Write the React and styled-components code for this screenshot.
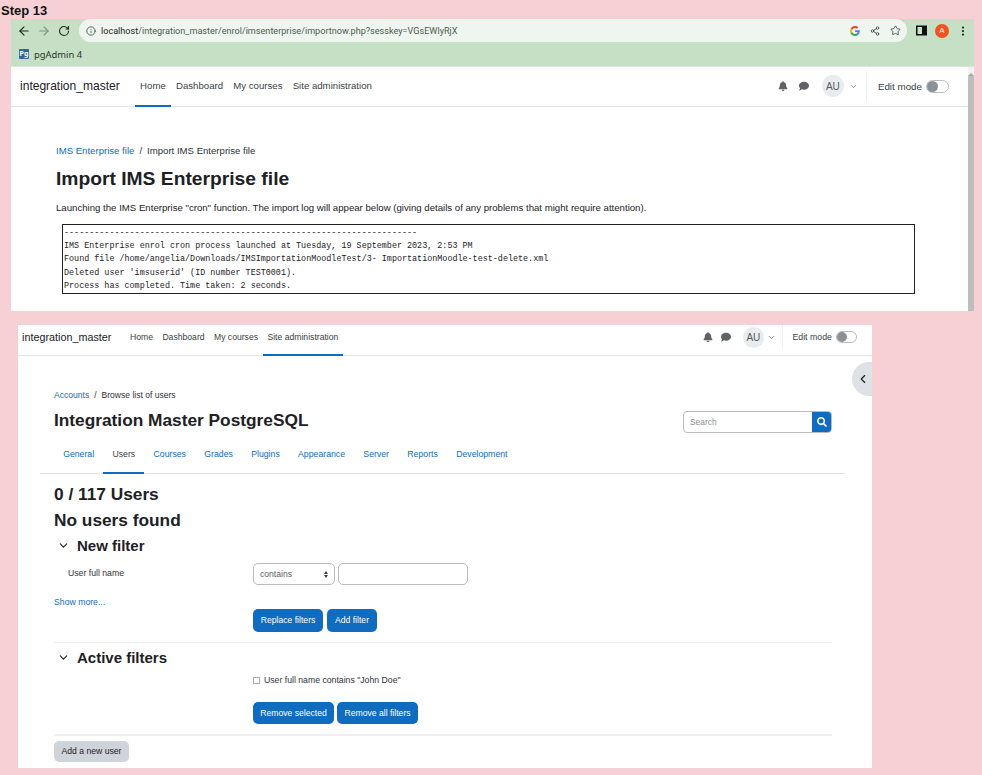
import React from 'react';
import styled, { createGlobalStyle } from 'styled-components';
import { FaBell, FaComment, FaSearch } from 'react-icons/fa';
import { ArrowLeft, ArrowRight, RotateCw, Info, ChevronDown, ChevronLeft, EllipsisVertical, Share2, Star } from 'lucide-react';

const GlobalStyle = createGlobalStyle`
  html, body {
    margin: 0;
    padding: 0;
    background: #f7d0d5;
    font-family: "Liberation Sans", Arial, sans-serif;
    color: #1d2125;
  }
  * { box-sizing: border-box; }
`;

const Page = styled.div`
  width: 982px;
  height: 775px;
  overflow: hidden;
`;

const StepTitle = styled.div`
  height: 19px;
  padding: 3px 0 0 1px;
  font-size: 13px;
  font-weight: 700;
  line-height: 15px;
  color: #111;
`;

const BrowserShot = styled.div`
  margin-left: 11px;
  width: 963px;
  height: 292px;
  background: #fff;
  display: flex;
  flex-direction: column;
`;

const Toolbar = styled.div`
  height: 23px;
  background: #c5e0c5;
  display: flex;
  align-items: center;
`;

const NavIcons = styled.div`
  width: 68px;
  padding-left: 6px;
  display: flex;
  gap: 6px;
  color: #3a4a3c;
  flex: none;
`;

const Omnibox = styled.div`
  width: 828px;
  height: 23px;
  background: #eff6ef;
  border-radius: 12px;
  display: flex;
  align-items: center;
  padding: 0 6px 0 7px;
  flex: none;
`;

const Url = styled.span`
  margin-left: 5px;
  font-family: Roboto, sans-serif;
  font-size: 9.1px;
  color: #4d5c50;
  flex: 1;
  white-space: nowrap;
  b { font-weight: 400; color: #1f2a22; }
`;

const OmniIcons = styled.div`
  display: flex;
  align-items: center;
  gap: 10px;
  color: #3c4a3e;
`;

const ChromeEnd = styled.div`
  flex: 1;
  display: flex;
  align-items: center;
  justify-content: space-between;
  padding: 0 5px 0 9px;
  color: #1f2a22;
`;

const ProfileDot = styled.div`
  width: 14px;
  height: 14px;
  border-radius: 50%;
  background: #f4511e;
  color: #fff;
  font-size: 8px;
  line-height: 14px;
  text-align: center;
`;

const BookmarkBar = styled.div`
  height: 25px;
  background: #c5e0c5;
  border-bottom: 1px solid #dde3dd;
  display: flex;
  align-items: center;
  padding-left: 8px;
  gap: 5px;
  font-family: "Noto Sans", sans-serif;
  font-size: 9.4px;
  color: #2b352d;
`;

const PgIcon = styled.span`
  width: 10px;
  height: 10px;
  background: #336791;
  border-radius: 1px;
  color: #fff;
  font-size: 7px;
  font-weight: 700;
  line-height: 10px;
  text-align: center;
`;

const BrowserBody = styled.div`
  flex: 1;
  display: flex;
  min-height: 0;
`;

const BrowserMain = styled.div`
  flex: 1;
  min-width: 0;
`;

const ScrollTrack = styled.div`
  width: 6px;
  background: #f1f1f1;
  display: flex;
  flex-direction: column;
`;

const ScrollArrow = styled.div`
  height: 9px;
  flex: none;
  display: flex;
  justify-content: center;
  padding-top: 3px;
  &::before {
    content: '';
    border-left: 3px solid transparent;
    border-right: 3px solid transparent;
    border-bottom: 3px solid #a3a3a3;
  }
`;

const ScrollThumb = styled.div`
  flex: 1;
  background: #bdbdbd;
`;

const Navbar = styled.div`
  height: ${(p) => p.$height}px;
  background: #fff;
  border-bottom: 1px solid #e3e4e5;
  display: flex;
  align-items: stretch;
  padding-left: ${(p) => p.$left}px;
`;

const Brand = styled.div`
  font-size: ${(p) => p.$size}px;
  color: #1d2125;
  align-self: center;
  margin-bottom: ${(p) => p.$lift}px;
  width: ${(p) => p.$width}px;
  flex: none;
  white-space: nowrap;
`;

const NavLinks = styled.nav`
  display: flex;
  flex: 1;
`;

const NavLink = styled.a`
  font-size: ${(p) => p.$size}px;
  color: #3a3f44;
  padding: 0 ${(p) => p.$pad}px ${(p) => p.$lift}px;
  display: flex;
  align-items: center;
  border-bottom: 2px solid ${(p) => (p.$active ? '#0f6cbf' : 'transparent')};
  margin-bottom: -1px;
  white-space: nowrap;
`;

const UserArea = styled.div`
  display: flex;
  align-items: center;
  color: #5e6469;
  padding-right: ${(p) => p.$right}px;
  padding-bottom: ${(p) => p.$lift}px;
`;

const IconGap = styled.span`
  display: flex;
  align-items: center;
  margin-left: ${(p) => p.$before || 0}px;
  margin-right: ${(p) => p.$gap}px;
  color: #5f6368;
`;

const Avatar = styled.div`
  width: ${(p) => p.$size}px;
  height: ${(p) => p.$size}px;
  border-radius: 50%;
  background: #e9ecef;
  color: #555b60;
  font-size: 10px;
  display: flex;
  align-items: center;
  justify-content: center;
`;

const EditMode = styled.div`
  display: flex;
  align-items: center;
  align-self: stretch;
  border-left: 1px solid #eff0f1;
  margin: ${(p) => p.$inset}px 0 ${(p) => p.$inset}px ${(p) => p.$gap}px;
  padding-left: ${(p) => p.$pad}px;
  gap: 4px;
  font-size: ${(p) => p.$size}px;
  color: #3a3f44;
`;

const Toggle = styled.span`
  width: ${(p) => p.$width}px;
  height: ${(p) => p.$height}px;
  border: 1px solid #b8bcc0;
  border-radius: 7px;
  display: flex;
  align-items: center;
  &::before {
    content: '';
    width: ${(p) => p.$height - 2}px;
    height: ${(p) => p.$height - 2}px;
    border-radius: 50%;
    background: #8b9199;
  }
`;

const ImportContent = styled.div`
  padding: 38px 0 0 45px;
`;

const Crumbs = styled.div`
  display: flex;
  gap: ${(p) => p.$gap}px;
  font-size: ${(p) => p.$size}px;
  line-height: 12px;
  color: #2e3338;
  a { color: #0f6cbf; }
`;

const Heading = styled.h1`
  margin: ${(p) => p.$top || 0}px 0 0;
  font-size: ${(p) => p.$size}px;
  line-height: ${(p) => p.$line}px;
  font-weight: 700;
  color: #1d2125;
`;

const Lead = styled.p`
  margin: 8px 0 0;
  font-size: 9.65px;
  line-height: 14px;
  color: #1d2125;
`;

const LogBox = styled.pre`
  margin: 9px 0 0 6px;
  width: 853px;
  height: 70px;
  border: 1px solid #222;
  padding: 2px 1px;
  font-family: "Liberation Mono", monospace;
  font-size: 8.42px;
  line-height: 13.2px;
  color: #1d2125;
`;

const AdminShot = styled.div`
  position: relative;
  margin: 14px 0 0 18px;
  width: 854px;
  height: 443px;
  background: #fff;
`;

const DrawerToggle = styled.div`
  position: absolute;
  right: 0;
  top: 37px;
  width: 20px;
  height: 34px;
  background: #dee2e6;
  border-radius: 17px 0 0 17px;
  display: flex;
  align-items: center;
  padding-left: 4px;
  color: #1d2125;
`;

const AdminContent = styled.div`
  padding: 33px 40px 0 36px;
`;

const HeadRow = styled.div`
  display: flex;
  justify-content: space-between;
  align-items: flex-start;
  margin-top: 10px;
  height: 22px;
`;

const SearchBox = styled.div`
  width: 149px;
  height: 22px;
  display: flex;
  border: 1px solid #b8bcc0;
  border-radius: 4px;
  overflow: hidden;
`;

const SearchText = styled.div`
  flex: 1;
  padding-left: 6px;
  font-size: 8.4px;
  line-height: 20px;
  color: #8a9096;
`;

const SearchButton = styled.div`
  width: 20px;
  margin: -1px;
  background: #0f6cbf;
  color: #fff;
  display: flex;
  align-items: center;
  justify-content: center;
`;

const Tabs = styled.div`
  display: flex;
  margin: 3px -13px 0 -14px;
  padding-left: 14px;
  height: 38px;
  border-bottom: 1px solid #e3e4e5;
`;

const Tab = styled.a`
  padding: 0 9.15px;
  display: flex;
  align-items: center;
  font-size: 8.72px;
  color: ${(p) => (p.$active ? '#3a3f44' : '#0f6cbf')};
  border-bottom: 2px solid ${(p) => (p.$active ? '#0f6cbf' : 'transparent')};
  margin-bottom: -1px;
`;

const CountHeading = styled.h2`
  margin: ${(p) => p.$top}px 0 0;
  font-size: 17.3px;
  line-height: 26px;
  font-weight: 700;
`;

const SectionHead = styled.div`
  display: flex;
  align-items: center;
  margin-top: ${(p) => p.$top}px;
  height: 26px;
  padding: 0 0 2px 3px;
  gap: 7px;
  font-size: 15px;
  font-weight: 700;
  color: #1d2125;
`;

const FormRow = styled.div`
  display: grid;
  grid-template-columns: 199px 1fr;
  margin-top: ${(p) => p.$top}px;
`;

const FieldLabel = styled.div`
  padding-left: 14px;
  font-size: 8.7px;
  line-height: 20px;
  color: #2e3338;
`;

const Fields = styled.div`
  display: flex;
  gap: ${(p) => p.$gap}px;
  align-items: center;
`;

const SelectBox = styled.div`
  width: 82px;
  height: 22px;
  border: 1px solid #b8bcc0;
  border-radius: 5px;
  padding: 0 6px;
  display: flex;
  align-items: center;
  justify-content: space-between;
  font-size: 8.6px;
  color: #5a6066;
`;

const Updown = styled.span`
  display: flex;
  flex-direction: column;
  gap: 1px;
  &::before, &::after {
    content: '';
    border-left: 2px solid transparent;
    border-right: 2px solid transparent;
  }
  &::before { border-bottom: 3px solid #3a3f44; }
  &::after { border-top: 3px solid #3a3f44; }
`;

const TextBox = styled.div`
  width: 130px;
  height: 22px;
  border: 1px solid #b8bcc0;
  border-radius: 5px;
`;

const ShowMore = styled.a`
  display: block;
  margin-top: 11px;
  font-size: 8.7px;
  line-height: 12px;
  height: 10px;
  color: #0f6cbf;
`;

const Button = styled.button`
  height: ${(p) => p.$height}px;
  width: ${(p) => p.$width}px;
  padding: 0 0 ${(p) => (p.$height > 22 ? 1 : 0)}px;
  border: 0;
  border-radius: 5px;
  background: ${(p) => (p.$secondary ? '#ced4da' : '#0f6cbf')};
  color: ${(p) => (p.$secondary ? '#1d2125' : '#fff')};
  font-family: inherit;
  font-size: 8.65px;
`;

const Divider = styled.div`
  margin-top: ${(p) => p.$top}px;
  height: ${(p) => p.$thick}px;
  background: #eff0f1;
`;

const CheckLine = styled.label`
  display: flex;
  align-items: center;
  gap: 4px;
  font-size: 8.7px;
  line-height: 12px;
  color: #2e3338;
`;

const CheckSquare = styled.span`
  width: 7px;
  height: 7px;
  border: 1px solid #a9adb1;
`;

const FooterRow = styled.div`
  margin-top: 4px;
`;

const GoogleG = () => (
  <svg width="10" height="10" viewBox="0 0 48 48">
    <path fill="#EA4335" d="M24 9.500c3.500 0 6.700 1.200 9.200 3.600l6.900-6.900C35.900 2.400 30.500 0 24 0 14.600 0 6.500 5.400 2.600 13.200l8 6.200C12.400 13.700 17.700 9.500 24 9.500z" />
    <path fill="#4285F4" d="M46.900 24.500c0-1.600-.1-3.100-.4-4.500H24v9h12.900c-.6 3-2.200 5.500-4.800 7.200l7.700 6c4.500-4.200 7.100-10.300 7.100-17.700z" />
    <path fill="#FBBC05" d="M10.600 28.600c-.5-1.400-.8-3-.8-4.600s.3-3.200.8-4.600l-8-6.200C.9 16.500 0 20.100 0 24s.9 7.500 2.600 10.800l8-6.200z" />
    <path fill="#34A853" d="M24 48c6.500 0 11.900-2.100 15.900-5.800l-7.700-6c-2.200 1.400-4.900 2.300-8.200 2.300-6.300 0-11.600-4.200-13.400-10l-8 6.200C6.500 42.600 14.600 48 24 48z" />
  </svg>
);

const SidePanelIcon = () => (
  <svg width="11" height="11" viewBox="0 0 11 11">
    <rect x="0.750" y="1.250" width="9.500" height="8.500" fill="none" stroke="#111" strokeWidth="1.500" />
    <rect x="6" y="1.250" width="4" height="8.500" fill="#111" />
  </svg>
);

const MoodleHeader = ({ height, left, lift, brandSize, brandWidth, linkSize, linkPad, active, avatarSize, right, inset, bellGap, commentGap, caretGap, caretAfter, editSize, editPad, toggleWidth, toggleHeight }) => (
  <Navbar $height={height} $left={left}>
    <Brand $size={brandSize} $width={brandWidth} $lift={lift}>integration_master</Brand>
    <NavLinks>
      {['Home', 'Dashboard', 'My courses', 'Site administration'].map((label) => (
        <NavLink key={label} $size={linkSize} $pad={linkPad} $lift={lift} $active={label === active}>
          {label}
        </NavLink>
      ))}
    </NavLinks>
    <UserArea $right={right} $lift={lift}>
      <IconGap $gap={bellGap}><FaBell size={10} /></IconGap>
      <IconGap $gap={commentGap}><FaComment size={10} /></IconGap>
      <Avatar $size={avatarSize}>AU</Avatar>
      <IconGap $before={caretGap} $gap={0}><ChevronDown size={9} strokeWidth={2} /></IconGap>
      <EditMode $inset={inset} $gap={caretAfter} $pad={editPad} $size={editSize}>
        Edit mode
        <Toggle $width={toggleWidth} $height={toggleHeight} />
      </EditMode>
    </UserArea>
  </Navbar>
);

export default function App() {
  return (
    <Page>
      <GlobalStyle />
      <StepTitle>Step 13</StepTitle>

      <BrowserShot>
        <Toolbar>
          <NavIcons>
            <ArrowLeft size={14} strokeWidth={2} color="#1f2a22" />
            <ArrowRight size={14} strokeWidth={2} color="#7f8f82" />
            <RotateCw size={12} strokeWidth={2.2} color="#1f2a22" style={{ marginLeft: 1, marginTop: 1 }} />
          </NavIcons>
          <Omnibox>
            <Info size={10} color="#3c4a3e" />
            <Url><b>localhost</b>/integration_master/enrol/imsenterprise/importnow.php?sesskey=VGsEWlyRjX</Url>
            <OmniIcons>
              <GoogleG />
              <Share2 size={10} strokeWidth={2} />
              <Star size={11} strokeWidth={1.8} />
            </OmniIcons>
          </Omnibox>
          <ChromeEnd>
            <SidePanelIcon />
            <ProfileDot>A</ProfileDot>
            <EllipsisVertical size={12} strokeWidth={2.5} />
          </ChromeEnd>
        </Toolbar>
        <BookmarkBar>
          <PgIcon>Pg</PgIcon>
          pgAdmin 4
        </BookmarkBar>
        <BrowserBody>
          <BrowserMain>
            <MoodleHeader
              height={40}
              left={9}
              lift={1}
              brandSize={12.05}
              brandWidth={115}
              linkSize={9.65}
              linkPad={5.1}
              active="Home"
              avatarSize={22}
              right={19}
              inset={4}
              bellGap={11}
              commentGap={13}
              caretGap={5}
              caretAfter={8}
              editSize={9.8}
              editPad={11}
              toggleWidth={23}
              toggleHeight={13}
            />
            <ImportContent>
              <Crumbs $gap={5} $size={9.6}>
                <a>IMS Enterprise file</a>
                <span>/</span>
                <span>Import IMS Enterprise file</span>
              </Crumbs>
              <Heading $size={19.25} $line={28} $top={8}>Import IMS Enterprise file</Heading>
              <Lead>
                Launching the IMS Enterprise "cron" function. The import log will appear below (giving details of any problems that might require attention).
              </Lead>
              <LogBox>{`----------------------------------------------------------------------
IMS Enterprise enrol cron process launched at Tuesday, 19 September 2023, 2:53 PM
Found file /home/angelia/Downloads/IMSImportationMoodleTest/3- ImportationMoodle-test-delete.xml
Deleted user 'imsuserid' (ID number TEST0001).
Process has completed. Time taken: 2 seconds.`}</LogBox>
            </ImportContent>
          </BrowserMain>
          <ScrollTrack>
            <ScrollArrow />
            <ScrollThumb />
          </ScrollTrack>
        </BrowserBody>
      </BrowserShot>

      <AdminShot>
        <MoodleHeader
          height={31}
          left={4}
          lift={6}
          brandSize={10.8}
          brandWidth={103.3}
          linkSize={8.65}
          linkPad={4.7}
          active="Site administration"
          avatarSize={21}
          right={15}
          inset={0}
          bellGap={8}
          commentGap={12}
          caretGap={3}
          caretAfter={6.5}
          editSize={8.8}
          editPad={9}
          toggleWidth={21}
          toggleHeight={12}
        />
        <DrawerToggle><ChevronLeft size={14} strokeWidth={2} /></DrawerToggle>
        <AdminContent>
          <Crumbs $gap={5} $size={8.55}>
            <a>Accounts</a>
            <span>/</span>
            <span>Browse list of users</span>
          </Crumbs>
          <HeadRow>
            <Heading $size={17.3} $line={18}>Integration Master PostgreSQL</Heading>
            <SearchBox>
              <SearchText>Search</SearchText>
              <SearchButton><FaSearch size={10} /></SearchButton>
            </SearchBox>
          </HeadRow>
          <Tabs>
            {['General', 'Users', 'Courses', 'Grades', 'Plugins', 'Appearance', 'Server', 'Reports', 'Development'].map((label) => (
              <Tab key={label} $active={label === 'Users'}>{label}</Tab>
            ))}
          </Tabs>
          <CountHeading $top={7}>0 / 117 Users</CountHeading>
          <CountHeading $top={0}>No users found</CountHeading>
          <SectionHead $top={0}>
            <ChevronDown size={13} strokeWidth={2} />
            New filter
          </SectionHead>
          <FormRow $top={4}>
            <FieldLabel>User full name</FieldLabel>
            <Fields $gap={3}>
              <SelectBox>contains<Updown /></SelectBox>
              <TextBox />
            </Fields>
          </FormRow>
          <ShowMore>Show more...</ShowMore>
          <FormRow $top={3}>
            <span />
            <Fields $gap={4}>
              <Button $height={23} $width={70}>Replace filters</Button>
              <Button $height={23} $width={50}>Add filter</Button>
            </Fields>
          </FormRow>
          <Divider $top={10} $thick={1} />
          <SectionHead $top={2}>
            <ChevronDown size={13} strokeWidth={2} />
            Active filters
          </SectionHead>
          <FormRow $top={3}>
            <span />
            <CheckLine><CheckSquare />User full name contains "John Doe"</CheckLine>
          </FormRow>
          <FormRow $top={16}>
            <span />
            <Fields $gap={3}>
              <Button $height={22} $width={81}>Remove selected</Button>
              <Button $height={22} $width={81}>Remove all filters</Button>
            </Fields>
          </FormRow>
          <Divider $top={10} $thick={2} />
          <FooterRow>
            <Button $secondary $height={21} $width={75}>Add a new user</Button>
          </FooterRow>
        </AdminContent>
      </AdminShot>
    </Page>
  );
}
